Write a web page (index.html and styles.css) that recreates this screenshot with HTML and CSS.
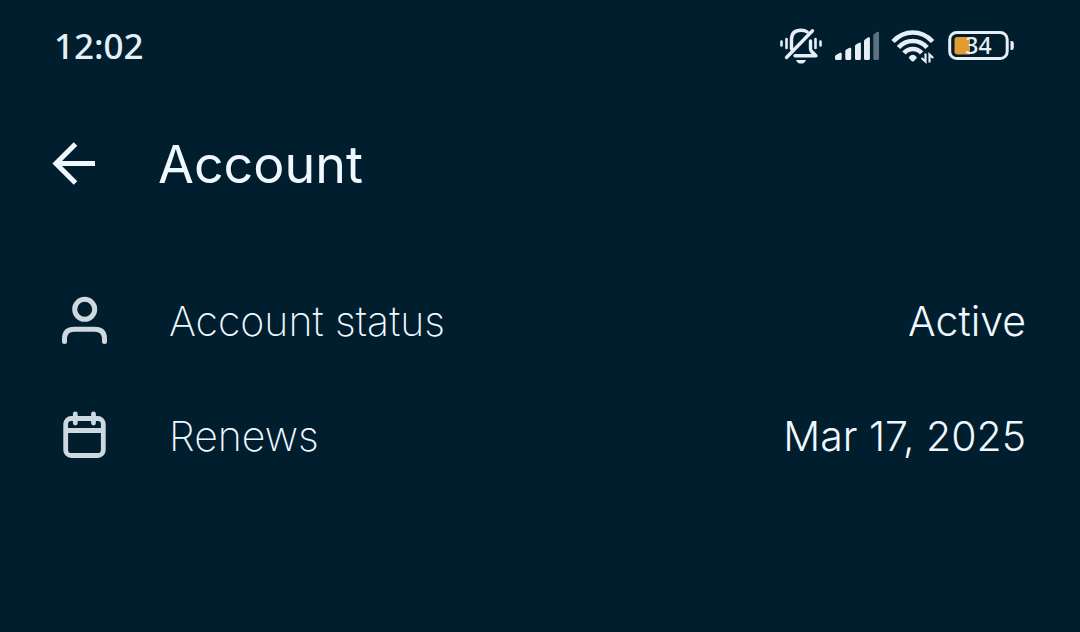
FILE: index.html
```html
<!DOCTYPE html>
<html lang="en">
<head>
<meta charset="utf-8">
<meta name="viewport" content="width=device-width, initial-scale=1">
<title>Account</title>
<link rel="stylesheet" href="styles.css">
</head>
<body>
<div class="status-bar">
  <time class="clock">12:02</time>
  <div class="indicators">
    <svg class="indicator" width="44" height="40" viewBox="778 26 44 40" fill="none" stroke="currentColor" stroke-width="3.400" stroke-linecap="round" stroke-linejoin="round" aria-label="Muted">
      <path d="M786.500 39v9M815.500 39v9M781.500 41.500v4M820.500 41.500v4" stroke-width="2.600"/>
      <path d="M791.500 49V39.500C791.500 33.500 795 30.200 801 30.200c2.500 0 4.600 .6 6.200 1.800M810.500 41v8c0 2.600 2.500 3.500 5.500 6.800H795"/>
      <path d="M786.500 57.500L812.500 30.800"/>
      <path d="M796 60h10c-.8 2.500-2.600 3.600-5 3.600s-4.200-1.100-5-3.600z" fill="currentColor" stroke="none"/>
    </svg>
    <svg class="indicator signal" width="46" height="40" viewBox="833 26 46 40" fill="currentColor" aria-label="Signal">
      <path d="M835 56.500q0-1 1-1.500l4-2.200q1.700-.6 1.700 1V58.500q0 1.500-1.500 1.500h-3.700q-1.500 0-1.500-1.500z"/>
      <path d="M845.300 51q0-1 1-1.500l3.200-1.700q1.700-.6 1.700 1V58.500q0 1.500-1.500 1.500h-2.900q-1.500 0-1.500-1.500z"/>
      <path d="M855 46q0-1 1-1.500l3.200-1.800q1.700-.6 1.700 1V58.500q0 1.500-1.500 1.500h-2.900q-1.500 0-1.500-1.500z"/>
      <path d="M864 41q0-1 1-1.500l3.200-2.200q1.700-.6 1.700 1V58.500q0 1.500-1.500 1.500h-2.900q-1.500 0-1.500-1.500z"/>
      <path class="faint" d="M873.300 35.500q0-1 1-1.500l3-2.200q1.700-.6 1.700 1V58.500q0 1.500-1.500 1.500h-2.700q-1.500 0-1.500-1.500z"/>
    </svg>
    <svg class="indicator" width="46" height="40" viewBox="890 26 46 40" fill="none" stroke="currentColor" stroke-width="4.600" aria-label="Wi-Fi">
      <path d="M893 41.500Q901.500 32.500 912.800 32.500T932.600 41.500"/>
      <path d="M898.500 47.500Q904.500 41 912.800 41T927.100 47.500"/>
      <path d="M904 53Q907.500 49 912.800 49T921.600 53"/>
      <path d="M909 57q3.800-4.500 7.600 0q.6 .8-.2 1.600l-2.400 2.400q-1.200 1-2.400 0l-2.400-2.400q-.8-.8-.2-1.600z" fill="currentColor" stroke="none"/>
      <path d="M925.500 53.500v8l-4-3.500M929.500 62.500v-8l3.700 3.500" stroke-width="2.200"/>
    </svg>
    <svg class="indicator" width="68" height="40" viewBox="947 26 68 40" aria-label="Battery 34 percent">
      <rect x="949.700" y="32.500" width="57.500" height="26" rx="7" fill="none" stroke="currentColor" stroke-width="3"/>
      <path d="M1010.500 41h1q2.300 0 2.300 2.300v4.400q0 2.300-2.300 2.300h-1z" fill="currentColor"/>
      <path class="charge" d="M957.500 37H970V54.500H957.500q-3 0-3-3V40q0-3 3-3z"/>
      <text class="battery-level" x="978.500" y="54" text-anchor="middle">34</text>
    </svg>
  </div>
</div>
<header class="header">
  <button class="back" type="button" aria-label="Back">
    <svg width="44" height="44" viewBox="52 142 44 44" fill="none" stroke="currentColor" stroke-width="5" aria-hidden="true">
      <path d="M95 163.500H55.500M75.500 144L56 163.500L75.500 183"/>
    </svg>
  </button>
  <h1 class="title">Account</h1>
</header>
<main>
  <dl class="details">
    <div class="row">
      <svg class="row-icon" width="50" height="50" viewBox="60 296 50 50" fill="none" stroke="currentColor" stroke-width="5" stroke-linecap="round" aria-hidden="true">
        <circle cx="84.700" cy="309.300" r="10"/>
        <path d="M64.500 341.500v-2.500q0-9.800 9.800-9.800h20.400q9.800 0 9.800 9.800v2.500"/>
      </svg>
      <dt class="label">Account status</dt>
      <dd class="value">Active</dd>
    </div>
    <div class="row">
      <svg class="row-icon" width="50" height="50" viewBox="60 411 50 50" fill="none" stroke="currentColor" stroke-width="4.800" stroke-linecap="round" aria-hidden="true">
        <rect x="65.700" y="418.500" width="37.600" height="37" rx="5.500"/>
        <path d="M66 430.500h37M75.300 414v9M93.500 414v9"/>
      </svg>
      <dt class="label">Renews</dt>
      <dd class="value">Mar 17, 2025</dd>
    </div>
  </dl>
</main>
</body>
</html>
```
FILE: styles.css
```css
* {
  box-sizing: border-box;
}

body {
  margin: 0;
  min-height: 100vh;
  background: #001e2e;
  color: #f0f8ff;
  font-family: Inter, "Noto Sans", sans-serif;
}

.status-bar {
  display: flex;
  align-items: center;
  justify-content: space-between;
  padding: 26px 65px 0 54px;
  color: #e6eef6;
}

.clock {
  font-family: "Noto Sans", sans-serif;
  font-size: 35px;
  font-weight: 500;
  line-height: 40px;
}

.indicators {
  display: flex;
  align-items: center;
  gap: 11px;
}

.indicator {
  display: block;
}

.faint {
  fill: #5c7182;
}

.charge {
  fill: #e29c30;
}

.battery-level {
  fill: currentColor;
  font-family: "Noto Sans", sans-serif;
  font-size: 23px;
  font-weight: 500;
}

.header {
  display: flex;
  align-items: center;
  gap: 62px;
  padding: 65px 52px 0;
}

.back {
  display: block;
  padding: 0;
  border: 0;
  background: none;
  color: inherit;
  cursor: pointer;
}

.back svg {
  display: block;
}

.title {
  margin: 0;
  padding-top: 2px;
  font-size: 52px;
  font-weight: 400;
  line-height: 64px;
}

.details {
  display: grid;
  gap: 51px;
  margin: 0;
  padding: 92px 54px 0 60px;
}

.row {
  display: flex;
  align-items: center;
  min-height: 64px;
}

.row-icon {
  flex: none;
  margin-right: 59px;
  color: #ced8df;
}

.label,
.value {
  margin: 0;
  font-size: 41px;
  line-height: 52px;
}

.label {
  font-weight: 250;
}

.value {
  margin-left: auto;
  font-weight: 350;
  text-align: right;
}
```
